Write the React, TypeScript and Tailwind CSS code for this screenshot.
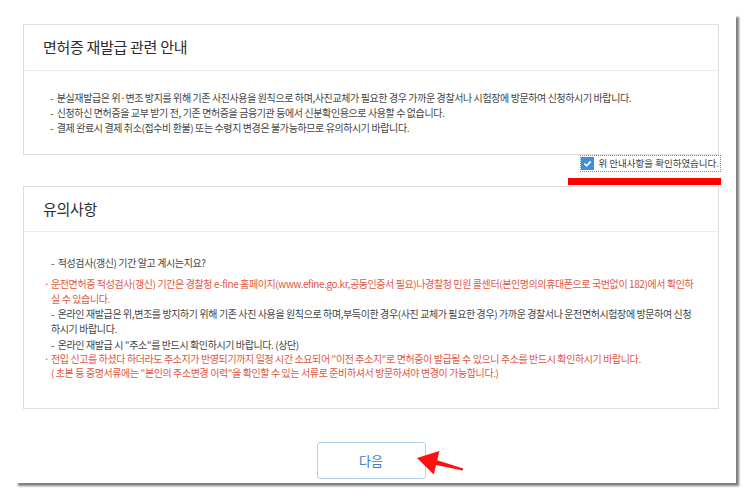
import React from 'react';

const font = { fontFamily: '"Noto Sans CJK KR", "Noto Sans", sans-serif' };

// single text line in the notice boxes
const Line = ({ children, red, className = 'h-[15px] leading-[15px]' }: { children: React.ReactNode; red?: boolean; className?: string }) => (
  <div
    className={`whitespace-nowrap text-[10px] tracking-[-0.4px] ${
      red ? 'text-[#e2553f]' : 'text-[#444]'
    } ${className}`}
  >
    {children}
  </div>
);

const Bullet = () => <span className="inline-block w-[7px] -ml-[7px]">·</span>;

const BoxHeader = ({ title, h }: { title: string; h: string }) => (
  <div className={`${h} flex items-center px-[19px] border-b border-[#ececec]`}>
    <h2 className="text-[15px] tracking-[-0.3px] text-[#2b2b2b]">{title}</h2>
  </div>
);

export default function App() {
  return (
    <div className="w-[752px] h-[500px] bg-white overflow-hidden" style={font}>
      <div className="relative ml-[15px] mt-[14px] w-[721px] h-[469px] bg-white shadow-[3px_3px_2px_rgba(0,0,0,0.5)] pl-[8px] pt-[10px]">
        <div className="w-[696px] flex flex-col">
          {/* 안내 */}
          <section className="border border-[#dedede]">
            <BoxHeader title="면허증 재발급 관련 안내" h="h-[46px]" />
            <div className="h-[83px] pt-[19px] pl-[26px]">
              <Line>- &nbsp;분실재발급은 위·변조 방지를 위해 기존 사진사용을 원칙으로 하며,사진교체가 필요한 경우 가까운 경찰서나 시험장에 방문하여 신청하시기 바랍니다.</Line>
              <Line>- &nbsp;신청하신 면허증을 교부 받기 전, 기존 면허증을 금융기관 등에서 신분확인용으로 사용할 수 없습니다.</Line>
              <Line>- &nbsp;결제 완료시 결제 취소(접수비 환불) 또는 수령지 변경은 불가능하므로 유의하시기 바랍니다.</Line>
            </div>
          </section>

          <div className="flex justify-end -mr-[2px]">
            <label className="h-[17px] flex items-center gap-[4px] border border-dotted border-[#8a8a8a] pr-[1px]">
              <span className="w-[13px] h-[13px] bg-[#3d8fe0] flex items-center justify-center">
                <svg width="9" height="9" viewBox="0 0 10 10">
                  <path d="M1.5 5.2 L4 7.6 L8.6 2.6" fill="none" stroke="white" strokeWidth="1.8" />
                </svg>
              </span>
              <span className="text-[9.5px] text-[#3a3a3a] leading-none">위 안내사항을 확인하였습니다.</span>
            </label>
          </div>
          <div className="flex justify-end -mr-[2px] mt-[6px]">
            <div className="w-[153px] h-[7px] bg-[#ff0000]" />
          </div>

          {/* 유의사항 */}
          <section className="mt-[1px] border border-[#dedede]">
            <BoxHeader title="유의사항" h="h-[45px]" />
            <div className="h-[176px] pt-[23px] pl-[27px]">
              <Line>- &nbsp;적성검사(갱신) 기간 알고 계시는지요?</Line>
              <Line red className="h-[15px] leading-[15px] mt-[6px]">
                <Bullet />운전면허증 적성검사(갱신) 기간은 경찰청 e-fine 홈페이지(www.efine.go.kr,공동인증서 필요)나경찰청 민원 콜센터(본인명의의휴대폰으로 국번없이 182)에서 확인하
              </Line>
              <Line red>실 수 있습니다.</Line>
              <Line>- &nbsp;온라인 재발급은 위,변조를 방지하기 위해 기존 사진 사용을 원칙으로 하며,부득이한 경우(사진 교체가 필요한 경우) 가까운 경찰서나 운전면허시험장에 방문하여 신청</Line>
              <Line>하시기 바랍니다.</Line>
              <Line className="h-[15px] leading-[15px] mt-[1px]">- &nbsp;온라인 재발급 시 "주소"를 반드시 확인하시기 바랍니다. (상단)</Line>
              <Line red className="h-[14px] leading-[14px]">
                <Bullet />전입 신고를 하셨다 하더라도 주소지가 반영되기까지 일정 시간 소요되어 "이전 주소지"로 면허증이 발급될 수 있으니 주소를 반드시 확인하시기 바랍니다.
              </Line>
              <Line red className="h-[14px] leading-[14px]">( 초본 등 증명서류에는 "본인의 주소변경 이력"을 확인할 수 있는 서류로 준비하셔서 방문하셔야 변경이 가능합니다.)</Line>
            </div>
          </section>

          <div className="relative flex justify-center mt-[33px]">
            <button className="w-[109px] h-[37px] rounded-[3px] border border-[#b3d2ea] bg-white text-[13px] text-[#3a7dc4]">
              다음
            </button>
            {/* red pointer arrow */}
            <svg className="absolute left-[387px] top-[2px]" width="60" height="36" viewBox="0 0 60 36">
              <polygon
                points="7,14 29.4,6.9 27.2,16.3 53.2,24.5 52.8,26.5 26,21.1 23.8,30.5"
                fill="#ff1010"
              />
            </svg>
          </div>
        </div>
      </div>
    </div>
  );
}
